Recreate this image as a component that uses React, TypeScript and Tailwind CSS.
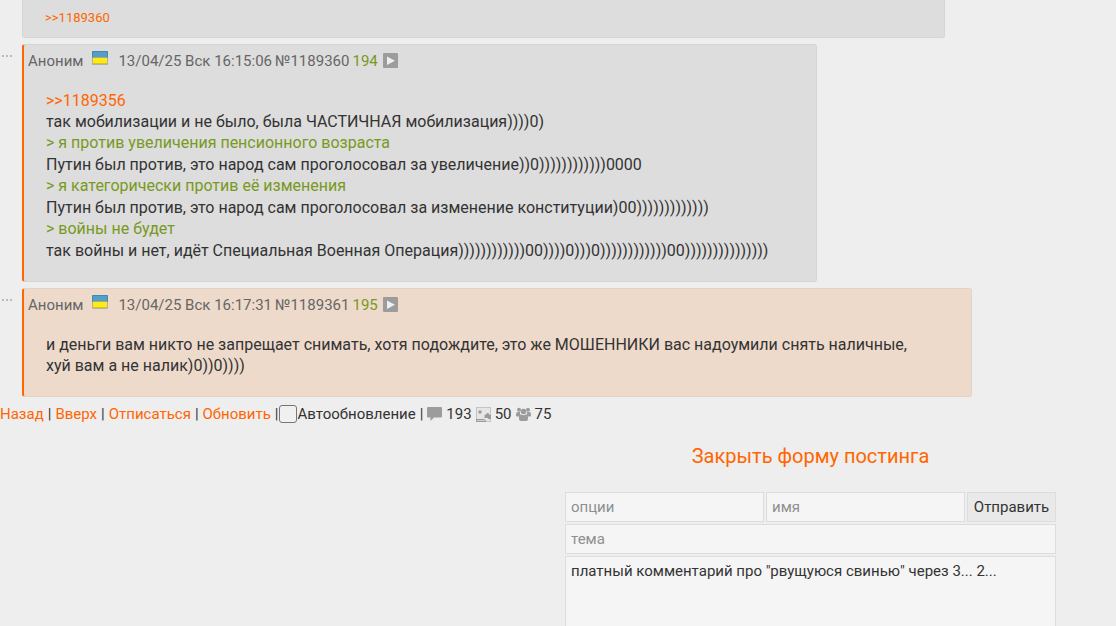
import { useState, type ReactNode } from 'react';
import { clsx } from 'clsx';

// ============================================================================
// Thread page
// Tail of a thread: last posts, thread navigation and the posting form
// ============================================================================

interface Line {
  kind: 'text' | 'quote' | 'reply';
  text: string;
}

interface Post {
  id: number;
  index: number;
  date: string;
  own?: boolean;
  lines: Line[];
}

const posts: Post[] = [
  {
    id: 1189360,
    index: 194,
    date: '13/04/25 Вск 16:15:06',
    lines: [
      { kind: 'reply', text: '>>1189356' },
      { kind: 'text', text: 'так мобилизации и не было, была ЧАСТИЧНАЯ мобилизация))))0)' },
      { kind: 'quote', text: '> я против увеличения пенсионного возраста' },
      { kind: 'text', text: 'Путин был против, это народ сам проголосовал за увеличение))0))))))))))))0000' },
      { kind: 'quote', text: '> я категорически против её изменения' },
      { kind: 'text', text: 'Путин был против, это народ сам проголосовал за изменение конституции)00)))))))))))))' },
      { kind: 'quote', text: '> войны не будет' },
      {
        kind: 'text',
        text: 'так войны и нет, идёт Специальная Военная Операция))))))))))))00))))0)))0))))))))))))00)))))))))))))))',
      },
    ],
  },
  {
    id: 1189361,
    index: 195,
    date: '13/04/25 Вск 16:17:31',
    own: true,
    lines: [
      {
        kind: 'text',
        text: 'и деньги вам никто не запрещает снимать, хотя подождите, это же МОШЕННИКИ вас надоумили снять наличные, хуй вам а не налик)0))0))))',
      },
    ],
  },
];

export default function App() {
  return (
    <main className="h-screen overflow-hidden bg-[#eeeeee] font-['Roboto',sans-serif] text-[15px] leading-5 text-[#333333]">
      {/* Replies of the previous post */}
      <article className="ml-[22px] h-[38px] max-w-[923px] rounded-b-[3px] border border-t-0 border-[#d5d5d5] bg-[#dddddd] pt-2 pl-[22px] text-[13px]">
        <a href="#1189360" className="text-[#ff6600]">
          {'>>1189360'}
        </a>
      </article>

      {posts.map((post) => (
        <PostCard key={post.id} post={post} />
      ))}

      <ThreadNav />
      <PostForm />
    </main>
  );
}

function PostCard({ post }: { post: Post }) {
  return (
    <div className="mt-1.5 flex items-start">
      <button aria-label="Меню поста" className="flex w-[22px] shrink-0 gap-[2px] pt-[11px] pl-[2px]">
        <span className="size-[2px] bg-[#bbbbbb]" />
        <span className="size-[2px] bg-[#bbbbbb]" />
        <span className="size-[2px] bg-[#bbbbbb]" />
      </button>
      <article
        className={clsx(
          'max-w-[950px] rounded-[3px] border border-l-2 border-l-[#ff6600]',
          post.own
            ? 'border-y-[#e6d2c4] border-r-[#e6d2c4] bg-[#eddacb]'
            : 'border-y-[#d5d5d5] border-r-[#d5d5d5] bg-[#dddddd]'
        )}
      >
        <header className="flex h-[26px] items-center pt-1.5 pl-1 whitespace-pre text-[#666666]">
          <span>Аноним</span>
          <FlagIcon />
          <time>{post.date}</time>
          <a href={`#${post.id}`} className="ml-[3px]">
            №{post.id}
          </a>
          <span className="ml-[3px] text-[#789922]">{post.index}</span>
          <button aria-label="Ответить" className="mb-px ml-[5px]">
            <PlayIcon />
          </button>
        </header>
        <div className="pt-[19px] pr-12 pb-5 pl-[22px] text-base leading-[21px]">
          {post.lines.map((line) => (
            <PostLine key={line.text} line={line} />
          ))}
        </div>
      </article>
    </div>
  );
}

function PostLine({ line }: { line: Line }) {
  if (line.kind === 'reply') {
    return (
      <a href={`#${line.text.slice(2)}`} className="block text-[#ff6600]">
        {line.text}
      </a>
    );
  }
  if (line.kind === 'quote') {
    return <p className="leading-[22px] text-[#789922]">{line.text}</p>;
  }
  return <p>{line.text}</p>;
}

function NavLink({ children }: { children: ReactNode }) {
  return (
    <a href="#top" className="text-[#ff6600]">
      {children}
    </a>
  );
}

function ThreadNav() {
  const [auto, setAuto] = useState(false);

  return (
    <nav className="mt-[7px] flex items-center">
      <div className="flex gap-1">
        <NavLink>Назад</NavLink>
        <span>|</span>
        <NavLink>Вверх</NavLink>
        <span>|</span>
        <NavLink>Отписаться</NavLink>
        <span>|</span>
        <NavLink>Обновить</NavLink>
        <span>|</span>
      </div>
      <input
        id="autorefresh"
        type="checkbox"
        checked={auto}
        onChange={(e) => setAuto(e.target.checked)}
        className="mr-px size-[18px] appearance-none rounded-[3px] border border-[#767676] bg-[#f0f0f0] checked:bg-[#ff6600]"
      />
      <label htmlFor="autorefresh">Автообновление</label>
      <span className="mx-1">|</span>
      <CommentIcon />
      <span className="mx-1">193</span>
      <ImageIcon />
      <span className="mx-1">50</span>
      <UsersIcon />
      <span className="ml-1">75</span>
    </nav>
  );
}

const field = 'border border-[#dddddd] bg-[#f5f5f5] px-[5px] outline-none placeholder:text-[#8f8f8f]';

function PostForm() {
  const [comment, setComment] = useState('платный комментарий про "рвущуюся свинью" через 3... 2...');

  return (
    <section className="mt-5 mr-[60px] ml-auto w-[491px]">
      <div className="text-center text-xl leading-6">
        <button className="text-[#ff6600]">Закрыть форму постинга</button>
      </div>
      <form className="mt-6 flex flex-col gap-[2px]" onSubmit={(e) => e.preventDefault()}>
        <div className="flex gap-[2px]">
          <input aria-label="опции" placeholder="опции" className={clsx(field, 'h-[30px] min-w-0 flex-1')} />
          <input aria-label="имя" placeholder="имя" className={clsx(field, 'h-[30px] min-w-0 flex-1')} />
          <button type="submit" className="h-[30px] w-[89px] border border-[#dddddd] bg-[#e9e9e9]">
            Отправить
          </button>
        </div>
        <input aria-label="тема" placeholder="тема" className={clsx(field, 'h-[30px]')} />
        <textarea
          aria-label="комментарий"
          value={comment}
          onChange={(e) => setComment(e.target.value)}
          className={clsx(field, 'h-40 resize-none pt-1')}
        />
      </form>
    </section>
  );
}

// ============================================================================
// Icons
// ============================================================================

function FlagIcon() {
  return (
    <svg width="16" height="14" viewBox="0 0 16 14" className="mr-2.5 mb-1.5 ml-[9px]">
      <rect width="16" height="14" rx="1" fill="#b5b1a0" />
      <rect width="16" height="7" rx="1" fill="#4089b0" />
      <rect x="1" y="1" width="14" height="5" fill="#559fc6" />
      <rect x="1" y="7" width="14" height="5" fill="#ffe916" />
      <path d="M1 6.500h14" stroke="#9fae7a" />
      <path d="M1 12.500h14" stroke="#d6c51d" />
    </svg>
  );
}

function PlayIcon() {
  return (
    <svg width="15" height="15" viewBox="0 0 15 15" className="block">
      <rect width="15" height="15" rx="1" fill="#9c9c9c" />
      <path d="M4 3.500v8.500l8-4.250z" fill="#eeeeee" />
    </svg>
  );
}

function CommentIcon() {
  return (
    <svg width="15" height="14" viewBox="0 0 15 14" fill="#9c9c9c">
      <path d="M1 0h13a1 1 0 0 1 1 1v8.500a1 1 0 0 1-1 1H7L3.500 14v-3.500H1a1 1 0 0 1-1-1V1a1 1 0 0 1 1-1z" />
    </svg>
  );
}

function ImageIcon() {
  return (
    <svg width="15" height="15" viewBox="0 0 15 15">
      <rect x="0.500" y="0.500" width="14" height="14" fill="#e6e6e6" stroke="#c4c4c4" />
      <circle cx="4" cy="5" r="1.700" fill="#9c9c9c" />
      <path d="M8.500 11V8l1.500-.500q.500-2 2-1.500 1.500.500 1.500 2H15v4h-3V11zM0 12h8l2 1.500V15H0z" fill="#9c9c9c" />
      <path d="M1 13.500h8" stroke="#cccccc" />
    </svg>
  );
}

function UsersIcon() {
  return (
    <svg width="15" height="14" viewBox="0 0 15 14" fill="#9c9c9c">
      <circle cx="3" cy="2.800" r="2" />
      <circle cx="12" cy="2.800" r="2" />
      <path d="M0 8.500V7q0-2 2-2h2q-.5 2.500 1 3.500L3.500 9.500H1q-1 0-1-1zM15 8.500V7q0-2-2-2h-2q.5 2.500-1 3.500l1.500 1H14q1 0 1-1z" />
      <circle cx="7.500" cy="4.500" r="2.800" />
      <path d="M3 12v-1.500q0-3 2.500-3 2 1.500 4 0 2.500 0 2.500 3V12q0 2-2 2H5q-2 0-2-2z" />
    </svg>
  );
}
